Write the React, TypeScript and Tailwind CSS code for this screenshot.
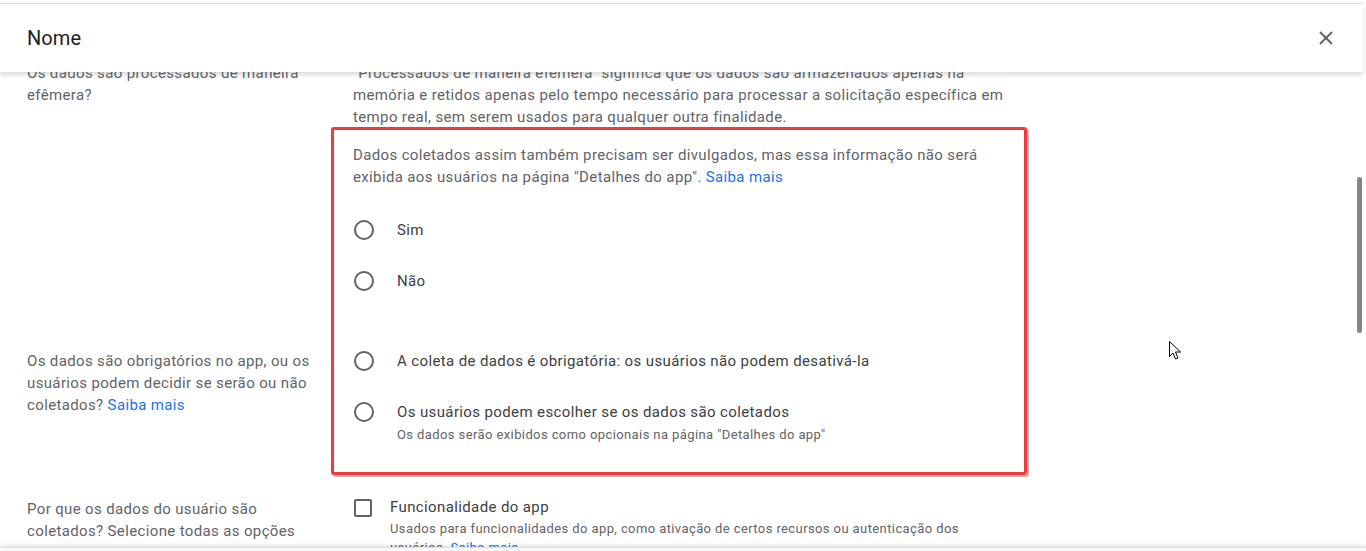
import { X } from "lucide-react";

function Radio() {
  return <span className="block h-[20px] w-[20px] shrink-0 rounded-full border-2 border-[#5f6368]" />;
}

function RadioOption({ label, hint }: { label: string; hint?: string }) {
  return (
    <div className="flex items-start gap-[23px] pl-[1px]">
      <Radio />
      <div>
        <p className="text-[15px] leading-[20px] tracking-[0.38px] text-[#3c4043]">{label}</p>
        {hint && (
          <p className="mt-[5px] text-[13px] leading-[16px] tracking-[0.4px] text-[#5f6368]">
            {hint}
          </p>
        )}
      </div>
    </div>
  );
}

function Link({ children }: { children: React.ReactNode }) {
  return <span className="text-[#1a73e8]">{children}</span>;
}

export default function App() {
  return (
    <div className="relative h-[551px] overflow-hidden bg-white font-['Roboto',sans-serif]">
      <header className="absolute inset-x-0 top-[3px] z-10 mr-[3px] flex h-[69px] items-center justify-between border-t border-[#dadce0] bg-white pl-[27px] pr-[26px] shadow-[0_3px_4px_rgba(60,64,67,0.18)]">
        <h1 className="text-[20px] tracking-[0.1px] text-[#202124]">Nome</h1>
        <X className="h-[22px] w-[22px] text-[#5f6368]" strokeWidth={2.1} />
      </header>

      <main className="pl-[27px] pt-[62px] text-[15px] leading-[22px] tracking-[0.36px] text-[#5f6368]">
        <section className="grid grid-cols-[304px_1fr]">
          <p className="w-[290px]">Os dados são processados de maneira efêmera?</p>
          <p className="w-[680px] pl-[22px]">
            "Processados de maneira efêmera" significa que os dados são armazenados apenas na
            memória e retidos apenas pelo tempo necessário para processar a solicitação específica
            em tempo real, sem serem usados para qualquer outra finalidade.
          </p>
        </section>

        <section className="-mt-px grid grid-cols-[304px_1fr]">
          <p className="w-[290px] pt-[223px]">
            Os dados são obrigatórios no app, ou os usuários podem decidir se serão ou não
            coletados? <Link>Saiba mais</Link>
          </p>
          <div className="w-[696px] rounded-[3px] border-[3px] border-[#ee3a3e] px-[19px] pb-[29px] pt-[14px] shadow-[2px_2px_1px_rgba(0,0,0,0.3)]">
            <p className="w-[652px]">
              Dados coletados assim também precisam ser divulgados, mas essa informação não será
              exibida aos usuários na página "Detalhes do app". <Link>Saiba mais</Link>
            </p>
            <div className="mt-[32px] flex flex-col gap-[31px]">
              <RadioOption label="Sim" />
              <RadioOption label="Não" />
            </div>
            <div className="mt-[60px] flex flex-col gap-[31px]">
              <RadioOption label="A coleta de dados é obrigatória: os usuários não podem desativá-la" />
              <RadioOption
                label="Os usuários podem escolher se os dados são coletados"
                hint={'Os dados serão exibidos como opcionais na página "Detalhes do app"'}
              />
            </div>
          </div>
        </section>

        <section className="mt-[23px] grid grid-cols-[304px_1fr]">
          <p className="w-[290px]">
            Por que os dados do usuário são coletados? Selecione todas as opções aplicáveis.{" "}
            <Link>Saiba mais sobre os usos</Link>
          </p>
          <div className="flex items-start gap-[18px] pl-[23px]">
            <span className="mt-[1px] block h-[18px] w-[18px] shrink-0 rounded-[2px] border-2 border-[#5f6368]" />
            <div>
              <p className="-mt-px text-[15px] leading-[20px] tracking-[0.38px] text-[#3c4043]">
                Funcionalidade do app
              </p>
              <p className="mt-[2px] w-[600px] text-[13px] leading-[19px] tracking-[0.4px] text-[#5f6368]">
                Usados para funcionalidades do app, como ativação de certos recursos ou autenticação
                dos usuários. <Link>Saiba mais</Link>
              </p>
            </div>
          </div>
        </section>
      </main>

      <div className="absolute inset-x-0 bottom-0 h-[4px] border-t border-[#e0e0e0] bg-[#f8f9fa] shadow-[0_-2px_3px_rgba(60,64,67,0.12)]" />

      <div className="absolute right-[4px] top-[177px] h-[156px] w-[5px] rounded-full bg-[#80868b]" />

      <svg className="absolute left-[1169px] top-[341px]" width="13" height="20" viewBox="0 0 13 20">
        <path d="M0.5 0.5 V15.5 L4 12 L6.5 18 L9 17 L6.5 11 H11.5 Z" fill="white" stroke="black" strokeWidth="1" />
      </svg>
    </div>
  );
}
